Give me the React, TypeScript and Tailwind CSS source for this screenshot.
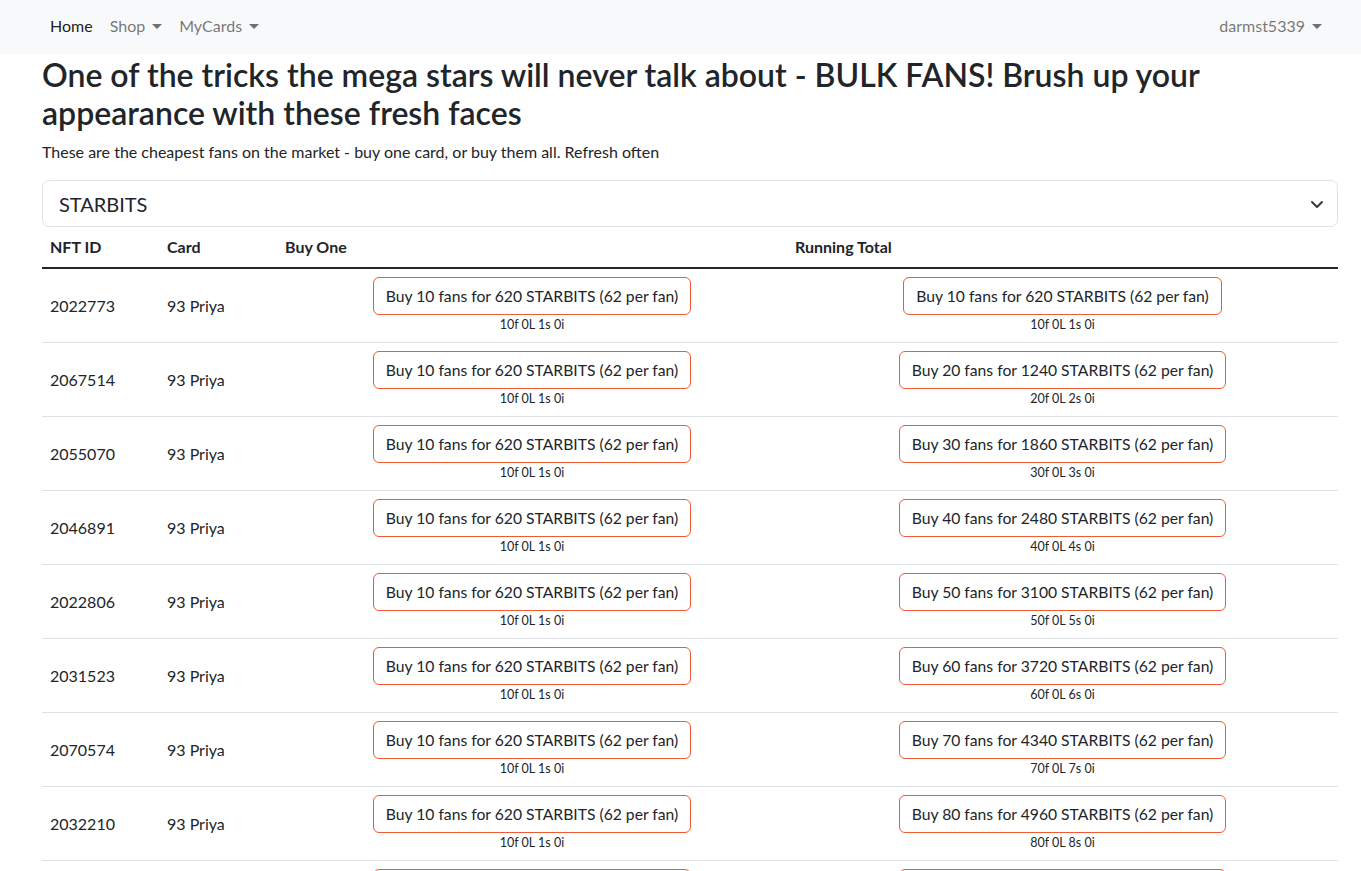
import React from 'react'

const ids = ['2022773', '2067514', '2055070', '2046891', '2022806', '2031523', '2070574', '2032210', '2049317', '2061102']

function Caret() {
  return <span className="ml-[7px] inline-block align-[3px] border-x-[5px] border-t-[5px] border-x-transparent border-t-current" />
}

function BuyButton({ fans, total, note }: { fans: number; total: number; note: string }) {
  return (
    <div className="flex flex-col items-center">
      <button className="h-[38px] px-3 rounded-[6px] border border-[#ef5b34] bg-white text-[15.7px] text-[#212529] whitespace-nowrap">
        Buy {fans} fans for {total} STARBITS (62 per fan)
      </button>
      <div className="text-[12.5px] leading-[19px] text-[#212529]">{note}</div>
    </div>
  )
}

export default function App() {
  return (
    <div className="min-h-screen bg-white font-['Lato','Segoe_UI',sans-serif] text-[#212529] text-[16px] leading-[24px]">
      <nav className="h-[54px] bg-[#f8f9fa] flex items-center justify-between pb-[2px] pl-[50px] pr-[39px]">
        <div className="flex items-center gap-[17px]">
          <span className="text-black/90">Home</span>
          <span className="text-black/55 flex items-center">Shop<Caret /></span>
          <span className="text-black/55 flex items-center">MyCards<Caret /></span>
        </div>
        <span className="text-black/55 flex items-center">darmst5339<Caret /></span>
      </nav>

      <div className="ml-[42px] w-[1296px]">
        <h2 className="pt-[2px] mb-2 text-[32px] leading-[38px] font-semibold">
          One of the tricks the mega stars will never talk about - BULK FANS! Brush up your appearance with these fresh faces
        </h2>
        <p className="mb-4">These are the cheapest fans on the market - buy one card, or buy them all. Refresh often</p>

        <div className="h-[47px] rounded-[7px] border border-[#dee2e6] flex items-center justify-between pl-4 pr-[12px]">
          <span className="text-[20px]">STARBITS</span>
          <svg width="16" height="16" viewBox="0 0 16 16" fill="none">
            <path d="M3 6l5 5 5-5" stroke="#343a40" strokeWidth="2" strokeLinecap="round" strokeLinejoin="round" />
          </svg>
        </div>

        <div className="grid grid-cols-[117px_118px_510px_551px] font-bold border-b-2 border-[#212529]">
          <div className="p-2">NFT ID</div>
          <div className="p-2">Card</div>
          <div className="p-2">Buy One</div>
          <div className="p-2">Running Total</div>
        </div>

        {ids.map((id, i) => {
          const n = i + 1
          return (
            <div key={id} className="grid grid-cols-[117px_118px_510px_551px] items-center border-b border-[#dee2e6]">
              <div className="p-2">{id}</div>
              <div className="p-2">93 Priya</div>
              <div className="p-2">
                <BuyButton fans={10} total={620} note="10f 0L 1s 0i" />
              </div>
              <div className="p-2">
                <BuyButton fans={n * 10} total={n * 620} note={`${n * 10}f 0L ${n}s 0i`} />
              </div>
            </div>
          )
        })}
      </div>
    </div>
  )
}
